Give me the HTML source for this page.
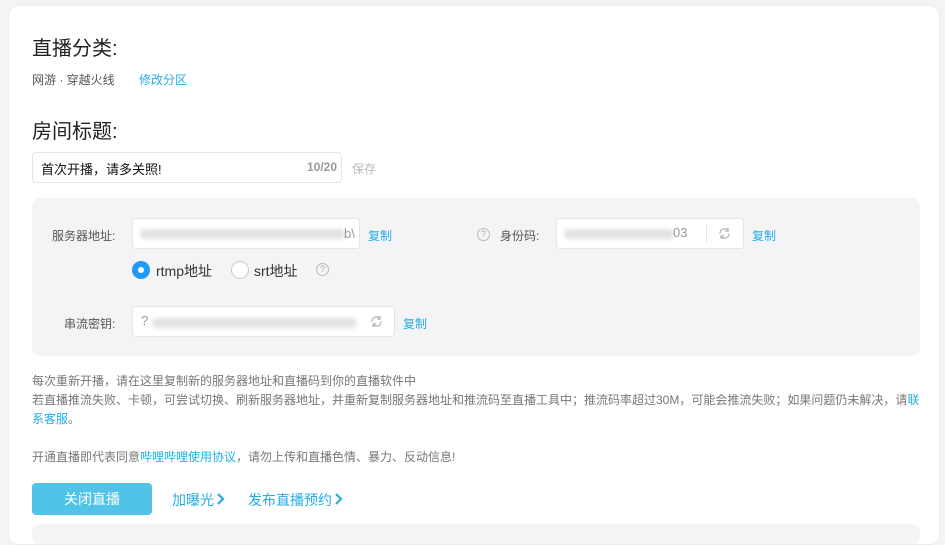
<!DOCTYPE html>
<html><head><meta charset="utf-8"><style>
*{margin:0;padding:0;box-sizing:border-box}
body{width:945px;height:535px;overflow:hidden;background:#f4f4f6;font-family:"Liberation Sans","Noto Sans CJK SC",sans-serif;position:relative}
.card{position:absolute;left:8px;top:5px;width:932px;height:540px;background:#fff;border-radius:10px;border:1px solid #ececec}
.a{position:absolute;white-space:nowrap}
h2{position:absolute;font-weight:normal;font-size:20px;color:#222}
.blue{color:#23ade5}
.inp{position:absolute;background:#fff;border:1px solid #e3e5e7;border-radius:4px}
.blur{position:absolute;height:10px;background:#e2e2e2;filter:blur(2px);border-radius:5px}
.q{position:absolute;width:13px;height:13px;border:1px solid #bbb;border-radius:50%;font-size:9px;color:#aaa;text-align:center;line-height:11px}
.sync{position:absolute}
</style></head><body>
<div class="card"></div>
<h2 style="left:32px;top:32px">直播分类:</h2>
<div class="a" style="left:32px;top:71px;font-size:12px;color:#555">网游 · 穿越火线</div>
<div class="a blue" style="left:139px;top:71px;font-size:12px">修改分区</div>
<h2 style="left:32px;top:115px">房间标题:</h2>
<div class="inp" style="left:32px;top:152px;width:310px;height:31px"></div>
<div class="a" style="left:41px;top:159px;font-size:13px;color:#111">首次开播，请多关照!</div>
<div class="a" style="left:307px;top:160px;font-size:12px;color:#999;font-weight:bold">10/20</div>
<div class="a" style="left:352px;top:160px;font-size:12px;color:#bbb">保存</div>

<div style="position:absolute;left:32px;top:198px;width:888px;height:158px;background:#f4f4f6;border-radius:8px"></div>
<div class="a" style="left:52px;top:227px;font-size:12px;color:#555">服务器地址:</div>
<div class="inp" style="left:132px;top:218px;width:228px;height:31px"></div>
<div class="blur" style="left:140px;top:229px;width:205px"></div>
<div class="a" style="left:344px;top:226px;font-size:13px;color:#999">b\</div>
<div class="a blue" style="left:368px;top:227px;font-size:12px">复制</div>

<div class="q" style="left:477px;top:228px">?</div>
<div class="a" style="left:500px;top:227px;font-size:12px;color:#555">身份码:</div>
<div class="inp" style="left:556px;top:218px;width:188px;height:31px"></div>
<div class="blur" style="left:564px;top:229px;width:110px"></div>
<div class="a" style="left:673px;top:225px;font-size:13px;color:#999">03</div>
<div style="position:absolute;left:706px;top:225px;width:1px;height:17px;background:#e3e5e7"></div>
<svg class="sync" style="left:718px;top:227px" width="13" height="13" viewBox="0 0 13 13" fill="none" stroke="#bbb" stroke-width="1.4"><path d="M2 6.5A4.5 4.5 0 0 1 10 3.5M11 6.5A4.5 4.5 0 0 1 3 9.5"/><path d="M10 1v3H7M3 12V9h3"/></svg>
<div class="a blue" style="left:752px;top:227px;font-size:12px">复制</div>

<div style="position:absolute;left:132px;top:261px;width:18px;height:18px;border-radius:50%;background:#1e9cf5"><div style="position:absolute;left:6px;top:6px;width:6px;height:6px;border-radius:50%;background:#fff"></div></div>
<div class="a" style="left:156px;top:261px;font-size:14px;color:#333">rtmp地址</div>
<div style="position:absolute;left:231px;top:261px;width:18px;height:18px;border-radius:50%;border:1px solid #ccc;background:#fff"></div>
<div class="a" style="left:254px;top:261px;font-size:14px;color:#333">srt地址</div>
<div class="q" style="left:316px;top:263px">?</div>

<div class="a" style="left:64px;top:315px;font-size:12px;color:#555">串流密钥:</div>
<div class="inp" style="left:132px;top:306px;width:263px;height:31px"></div>
<div class="a" style="left:141px;top:313px;font-size:13px;color:#999">?</div>
<div class="blur" style="left:152px;top:318px;width:205px"></div>
<svg class="sync" style="left:370px;top:315px" width="13" height="13" viewBox="0 0 13 13" fill="none" stroke="#bbb" stroke-width="1.4"><path d="M2 6.5A4.5 4.5 0 0 1 10 3.5M11 6.5A4.5 4.5 0 0 1 3 9.5"/><path d="M10 1v3H7M3 12V9h3"/></svg>
<div class="a blue" style="left:403px;top:315px;font-size:12px">复制</div>

<div style="position:absolute;left:32px;top:372px;width:890px;font-size:12px;line-height:19px;color:#777">每次重新开播，请在这里复制新的服务器地址和直播码到你的直播软件中<br>若直播推流失败、卡顿，可尝试切换、刷新服务器地址，并重新复制服务器地址和推流码至直播工具中；推流码率超过30M，可能会推流失败；如果问题仍未解决，请<span class="blue">联系客服</span>。</div>
<div class="a" style="left:32px;top:448px;font-size:12px;color:#777">开通直播即代表同意<span class="blue">哔哩哔哩使用协议</span>，请勿上传和直播色情、暴力、反动信息!</div>

<div style="position:absolute;left:32px;top:483px;width:120px;height:32px;background:#51c3e8;border-radius:4px;color:#fff;font-size:14px;text-align:center;line-height:32px">关闭直播</div>
<div class="a blue" style="left:172px;top:490px;font-size:14px">加曝光</div>
<svg style="position:absolute;left:216px;top:493px" width="9" height="12" viewBox="0 0 9 12"><path d="M2 1l5 5-5 5" fill="none" stroke="#23ade5" stroke-width="2.2"/></svg>
<div class="a blue" style="left:248px;top:490px;font-size:14px">发布直播预约</div>
<svg style="position:absolute;left:334px;top:493px" width="9" height="12" viewBox="0 0 9 12"><path d="M2 1l5 5-5 5" fill="none" stroke="#23ade5" stroke-width="2.2"/></svg>
<div style="position:absolute;left:32px;top:524px;width:888px;height:20px;background:#f4f4f6;border-radius:8px"></div>
</body></html>
